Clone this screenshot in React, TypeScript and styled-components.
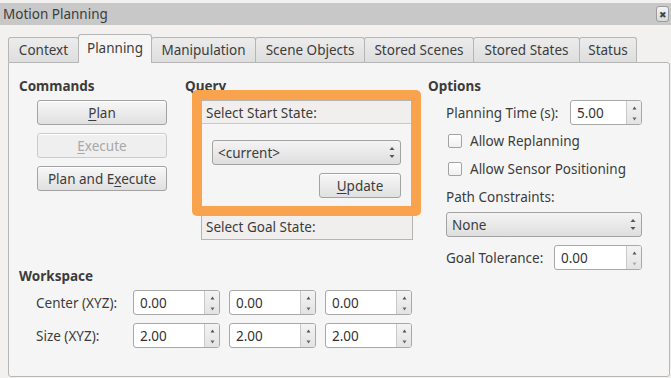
import React from 'react'
import styled, { createGlobalStyle, css } from 'styled-components'

const GlobalStyle = createGlobalStyle`
  html, body {
    margin: 0;
    padding: 0;
    background: #f2f1f0;
  }
  body {
    font-family: "Noto Sans", "Open Sans", sans-serif;
    font-size: 13.5px;
    color: #3c3c3c;
  }
`

const Window = styled.div`
  width: 671px;
  height: 378px;
  overflow: hidden;
  background: #f2f1f0;
  display: flex;
  flex-direction: column;
`

const TopStrip = styled.div`
  height: 3px;
  background: #f2f1f0;
`

const TitleBar = styled.div`
  height: 22px;
  background: #c8c8c8;
  display: flex;
  align-items: center;
  justify-content: space-between;
  padding: 0 2px 0 3px;
  line-height: 22px;
`

const CloseButton = styled.div`
  width: 11px;
  height: 14px;
  border: 1px solid #9c9c9c;
  border-radius: 3px;
  background: linear-gradient(#f4f4f4, #d8d8d8);
  display: flex;
  align-items: center;
  justify-content: center;
  font-size: 9px;
  color: #444;
  line-height: 1;
`

const Body = styled.div`
  padding: 9px 1px 0 8px;
  display: flex;
  flex-direction: column;
`

const TabBar = styled.div`
  height: 28px;
  display: flex;
  align-items: flex-end;
  position: relative;
  z-index: 1;
`

const Tab = styled.div<{ $w: number; $active?: boolean }>`
  width: ${p => p.$w}px;
  box-sizing: border-box;
  height: 25px;
  border: 1px solid #b6b6b6;
  border-bottom: none;
  border-radius: 3px 3px 0 0;
  background: linear-gradient(#ececec, #dedede);
  display: flex;
  align-items: center;
  justify-content: center;
  margin-left: -1px;
  white-space: nowrap;
  &:first-child { margin-left: 0; }
  ${p => p.$active && css`
    height: 29px;
    margin-bottom: -1px;
    background: #f5f5f5;
    position: relative;
    z-index: 2;
    padding-bottom: 3px;
  `}
`

const Panel = styled.div`
  height: 315px;
  box-sizing: border-box;
  border: 1px solid #b6b6b6;
  border-radius: 0 3px 3px 3px;
  background: #f5f5f5;
  display: flex;
  padding-left: 10px;
`

const LeftArea = styled.div`
  display: flex;
  flex-direction: column;
  width: 409px;
`

const TopRow = styled.div`
  display: flex;
`

const Section = styled.div<{ $w?: number }>`
  display: flex;
  flex-direction: column;
  padding-top: 15px;
  ${p => p.$w && css`width: ${p.$w}px;`}
`

const Heading = styled.div`
  font-weight: bold;
  line-height: 16px;
  height: 16px;
`

const ButtonStack = styled.div`
  display: flex;
  flex-direction: column;
  gap: 8px;
  margin: 6px 0 0 18px;
`

const PushButton = styled.div<{ $w?: number; $disabled?: boolean }>`
  width: ${p => p.$w ?? 130}px;
  height: 25px;
  box-sizing: border-box;
  border: 1px solid #a3a3a3;
  border-radius: 3px;
  background: linear-gradient(#f7f7f7, #e0e0e0);
  box-shadow: inset 0 1px 0 #ffffff;
  display: flex;
  align-items: center;
  justify-content: center;
  white-space: nowrap;
  u { text-underline-offset: 2px; }
  ${p => p.$disabled && css`
    border-color: #cbcbcb;
    background: #efefef;
    color: #a8a8a8;
  `}
`

const QueryBox = styled.div`
  position: relative;
  margin: 6px 0 0 16px;
  width: 212px;
`

const GroupHeader = styled.div<{ $bordered?: boolean }>`
  height: 24px;
  line-height: 24px;
  padding-left: 4px;
  box-sizing: border-box;
  background: #f0efee;
  border: 1px solid #b4b4b4;
  ${p => p.$bordered ? css`height: 26px; line-height: 24px;` : css`border-bottom-color: #c9c9c9;`}
`

const GroupBody = styled.div`
  height: 90px;
  box-sizing: border-box;
  padding: 16px 11px 0 10px;
  display: flex;
  flex-direction: column;
  align-items: flex-end;
  gap: 8px;
  border-left: 1px solid #b4b4b4;
  border-right: 1px solid #b4b4b4;
`

const Highlight = styled.div`
  position: absolute;
  left: -9px;
  top: -10px;
  width: 229px;
  height: 126px;
  box-sizing: border-box;
  border: 10px solid #f9a34f;
  border-radius: 5px;
  pointer-events: none;
`

const Combo = styled.div<{ $w?: number }>`
  width: ${p => (p.$w ? `${p.$w}px` : '100%')};
  height: 25px;
  box-sizing: border-box;
  border: 1px solid #a3a3a3;
  border-radius: 3px;
  background: linear-gradient(#f4f4f4, #dedede);
  display: flex;
  align-items: center;
  justify-content: space-between;
  padding: 0 5px 0 5px;
`

const Arrows = styled.svg`
  width: 6px;
  height: 13px;
  flex: none;
`

const ComboArrows = () => (
  <Arrows viewBox="0 0 6 13">
    <path d="M3 1 L5.5 4 L0.5 4 Z" fill="#555" />
    <path d="M3 12 L5.5 9 L0.5 9 Z" fill="#555" />
  </Arrows>
)

const SpinBox = styled.div<{ $w: number }>`
  width: ${p => p.$w}px;
  height: 25px;
  box-sizing: border-box;
  border: 1px solid #a8a8a8;
  border-radius: 3px;
  background: #ffffff;
  display: flex;
  overflow: hidden;
`

const SpinValue = styled.div`
  flex: 1;
  display: flex;
  align-items: center;
  padding-left: 6px;
  color: #333;
`

const SpinButtons = styled.div`
  width: 15px;
  border-left: 1px solid #c9c9c9;
  background: linear-gradient(#f3f3f3, #e3e3e3);
  display: flex;
  flex-direction: column;
  align-items: center;
  justify-content: space-between;
  padding: 5px 0 3px;
  box-sizing: border-box;
`

const Tick = styled.svg`
  width: 5px;
  height: 4px;
`

const Spin = ({ value, w, downDim }: { value: string; w: number; downDim?: boolean }) => (
  <SpinBox $w={w}>
    <SpinValue>{value}</SpinValue>
    <SpinButtons>
      <Tick viewBox="0 0 5 4"><path d="M2.5 0.5 L4.5 3.5 L0.5 3.5 Z" fill="#555" /></Tick>
      <Tick viewBox="0 0 5 4"><path d="M2.5 3.5 L4.5 0.5 L0.5 0.5 Z" fill={downDim ? '#aaa' : '#666'} /></Tick>
    </SpinButtons>
  </SpinBox>
)

const Workspace = styled.div`
  display: flex;
  flex-direction: column;
  margin-top: 28px;
`

const WsGrid = styled.div`
  display: grid;
  grid-template-columns: 88px 87px 87px 87px;
  column-gap: 9px;
  row-gap: 8px;
  margin: 6px 0 0 17px;
  align-items: center;
`

const Options = styled(Section)`
  width: 214px;
`

const OptRow = styled.div<{ $h?: number; $mt?: number }>`
  display: flex;
  align-items: center;
  height: ${p => p.$h ?? 25}px;
  margin: ${p => p.$mt ?? 0}px 0 0 18px;
  white-space: nowrap;
`

const Push = styled.div`
  margin-left: auto;
`

const CheckBox = styled.div`
  width: 14px;
  height: 14px;
  box-sizing: border-box;
  border: 1px solid #a3a3a3;
  border-radius: 2px;
  background: linear-gradient(#ffffff, #f0f0f0);
  margin: 0 8px 0 2px;
`

const tabs: [string, number][] = [
  ['Context', 71],
  ['Planning', 74],
  ['Manipulation', 105],
  ['Scene Objects', 110],
  ['Stored Scenes', 110],
  ['Stored States', 107],
  ['Status', 58],
]

export default function App() {
  return (
    <Window>
      <GlobalStyle />
      <TopStrip />
      <TitleBar>
        <span>Motion Planning</span>
        <CloseButton>✖</CloseButton>
      </TitleBar>
      <Body>
        <TabBar>
          {tabs.map(([label, w]) => (
            <Tab key={label} $w={w} $active={label === 'Planning'}>{label}</Tab>
          ))}
        </TabBar>
        <Panel>
          <LeftArea>
            <TopRow>
              <Section $w={166}>
                <Heading>Commands</Heading>
                <ButtonStack>
                  <PushButton><span><u>P</u>lan</span></PushButton>
                  <PushButton $disabled><span><u>E</u>xecute</span></PushButton>
                  <PushButton><span>Plan and E<u>x</u>ecute</span></PushButton>
                </ButtonStack>
              </Section>
              <Section $w={243}>
                <Heading>Query</Heading>
                <QueryBox>
                  <GroupHeader>Select Start State:</GroupHeader>
                  <GroupBody>
                    <Combo>
                      <span>&lt;current&gt;</span>
                      <ComboArrows />
                    </Combo>
                    <PushButton $w={82}><span><u>U</u>pdate</span></PushButton>
                  </GroupBody>
                  <GroupHeader $bordered>Select Goal State:</GroupHeader>
                  <Highlight />
                </QueryBox>
              </Section>
            </TopRow>
            <Workspace>
              <Heading>Workspace</Heading>
              <WsGrid>
                <span>Center (XYZ):</span>
                <Spin value="0.00" w={87} />
                <Spin value="0.00" w={87} />
                <Spin value="0.00" w={87} />
                <span>Size (XYZ):</span>
                <Spin value="2.00" w={87} />
                <Spin value="2.00" w={87} />
                <Spin value="2.00" w={87} />
              </WsGrid>
            </Workspace>
          </LeftArea>
          <Options>
            <Heading>Options</Heading>
            <OptRow $mt={6}>
              <span>Planning Time (s):</span>
              <Push><Spin value="5.00" w={72} /></Push>
            </OptRow>
            <OptRow $h={28} $mt={2}>
              <CheckBox />
              <span>Allow Replanning</span>
            </OptRow>
            <OptRow $h={28}>
              <CheckBox />
              <span>Allow Sensor Positioning</span>
            </OptRow>
            <OptRow $h={16} $mt={6}>
              <span>Path Constraints:</span>
            </OptRow>
            <OptRow $mt={7}>
              <Combo>
                <span>None</span>
                <ComboArrows />
              </Combo>
            </OptRow>
            <OptRow $mt={8}>
              <span>Goal Tolerance:</span>
              <Push><Spin value="0.00" w={88} downDim /></Push>
            </OptRow>
          </Options>
        </Panel>
      </Body>
    </Window>
  )
}
